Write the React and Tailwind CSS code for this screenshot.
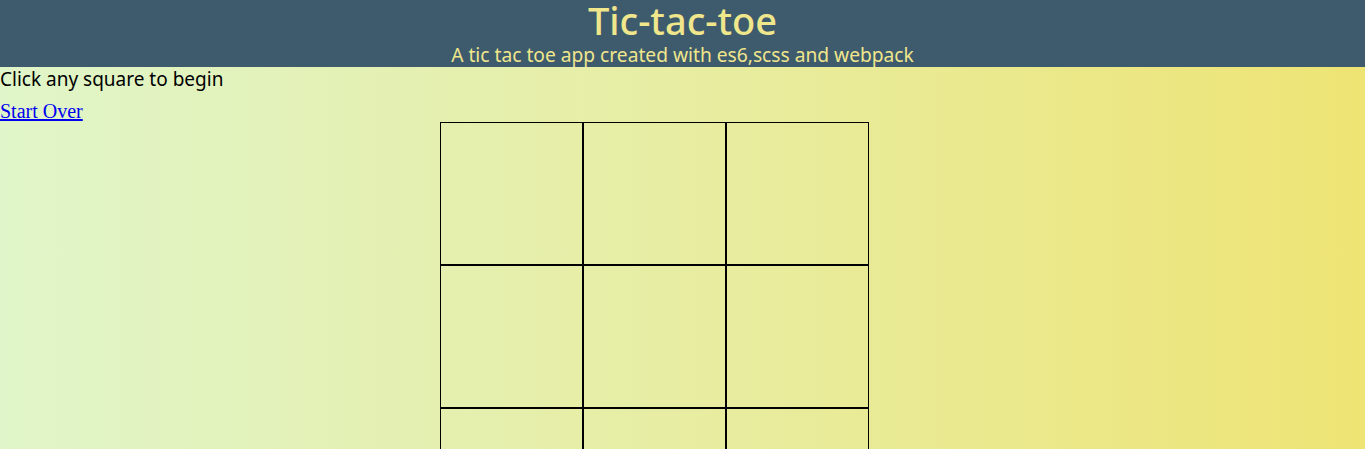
import React from 'react';

const cells = Array.from({ length: 9 });

export default function App() {
  return (
    <div className="min-h-[449px] bg-gradient-to-r from-[#e0f5c9] to-[#eee474] font-['Noto_Sans',sans-serif]">
      <header className="h-[67px] bg-[#3d5b6d] text-center text-[#f0e68c]">
        <h1 className="text-[38px] leading-[41px] font-medium">Tic-tac-toe</h1>
        <p className="mt-[1px] text-[19.2px] leading-[25px]">A tic tac toe app created with es6,scss and webpack</p>
      </header>
      <div className="text-[19px] leading-[24px] text-black">Click any square to begin</div>
      <div className="mt-[9px] h-[22px] font-['Liberation_Serif',serif] text-[20px] leading-[22px]">
        <a href="#" className="text-[#0000ee] underline">
          Start Over
        </a>
      </div>
      <div className="ml-[440px] grid w-[429px] grid-cols-[repeat(3,143px)]">
        {cells.map((_, i) => (
          <div key={i} className="h-[143px] border border-black" />
        ))}
      </div>
    </div>
  );
}
